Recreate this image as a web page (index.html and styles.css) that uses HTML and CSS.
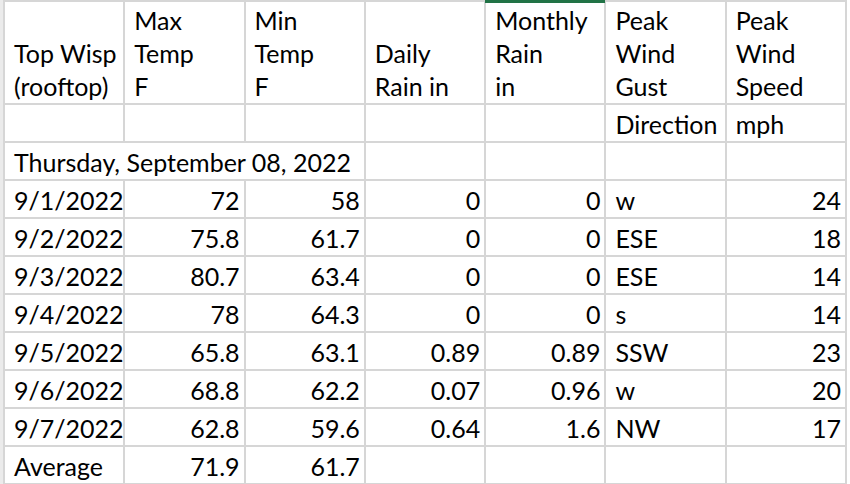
FILE: index.html
```html
<!DOCTYPE html>
<html>
<head>
<meta charset="utf-8">
<link rel="stylesheet" href="styles.css">
</head>
<body>
<div class="page">
  <div class="sheet">
    <div class="c">Top Wisp<br>(rooftop)</div>
    <div class="c">Max<br>Temp<br>F</div>
    <div class="c">Min<br>Temp<br>F</div>
    <div class="c">Daily<br>Rain in</div>
    <div class="c sel">Monthly<br>Rain<br>in</div>
    <div class="c">Peak<br>Wind<br>Gust</div>
    <div class="c">Peak<br>Wind<br>Speed</div>

    <div class="c"></div><div class="c"></div><div class="c"></div><div class="c"></div><div class="c"></div>
    <div class="c">Direction</div><div class="c">mph</div>

    <div class="c span3">Thursday, September 08, 2022</div>
    <div class="c"></div><div class="c"></div><div class="c"></div><div class="c"></div>

    <div class="c">9/1/2022</div><div class="c n">72</div><div class="c n">58</div><div class="c n">0</div><div class="c n">0</div><div class="c">w</div><div class="c n">24</div>
    <div class="c">9/2/2022</div><div class="c n">75.8</div><div class="c n">61.7</div><div class="c n">0</div><div class="c n">0</div><div class="c">ESE</div><div class="c n">18</div>
    <div class="c">9/3/2022</div><div class="c n">80.7</div><div class="c n">63.4</div><div class="c n">0</div><div class="c n">0</div><div class="c">ESE</div><div class="c n">14</div>
    <div class="c">9/4/2022</div><div class="c n">78</div><div class="c n">64.3</div><div class="c n">0</div><div class="c n">0</div><div class="c">s</div><div class="c n">14</div>
    <div class="c">9/5/2022</div><div class="c n">65.8</div><div class="c n">63.1</div><div class="c n">0.89</div><div class="c n">0.89</div><div class="c">SSW</div><div class="c n">23</div>
    <div class="c">9/6/2022</div><div class="c n">68.8</div><div class="c n">62.2</div><div class="c n">0.07</div><div class="c n">0.96</div><div class="c">w</div><div class="c n">20</div>
    <div class="c">9/7/2022</div><div class="c n">62.8</div><div class="c n">59.6</div><div class="c n">0.64</div><div class="c n">1.6</div><div class="c">NW</div><div class="c n">17</div>
    <div class="c">Average</div><div class="c n">71.9</div><div class="c n">61.7</div><div class="c"></div><div class="c"></div><div class="c"></div><div class="c"></div>
  </div>
</div>
</body>
</html>
```
FILE: styles.css
```css
html, body {
  margin: 0;
  padding: 0;
  background: #ffffff;
  overflow: hidden;
}
.page {
  display: flex;
  border-left: 3px solid #ebebeb;
  width: 847px;
  height: 484px;
  overflow: hidden;
}
.sheet {
  display: grid;
  width: 844px;
  box-sizing: border-box;
  padding: 2px;
  gap: 2px;
  background: #d6d6d6;
  grid-template-columns: repeat(7, 1fr);
  grid-template-rows: 101px repeat(10, 36px);
  font-family: Lato, "Liberation Sans", sans-serif;
  font-size: 25px;
  line-height: 33px;
  color: #000;
}
.c {
  background: #ffffff;
  display: flex;
  align-items: flex-end;
  padding: 0 4px 0 9px;
  white-space: nowrap;
  overflow: hidden;
  min-width: 0;
}
.n {
  justify-content: flex-end;
}
.span3 {
  grid-column: span 3;
}
.sel {
  position: relative;
  overflow: visible;
}
.sel::before {
  content: "";
  position: absolute;
  top: -2px;
  left: -1px;
  right: -1px;
  height: 3px;
  background: #217346;
}
```
